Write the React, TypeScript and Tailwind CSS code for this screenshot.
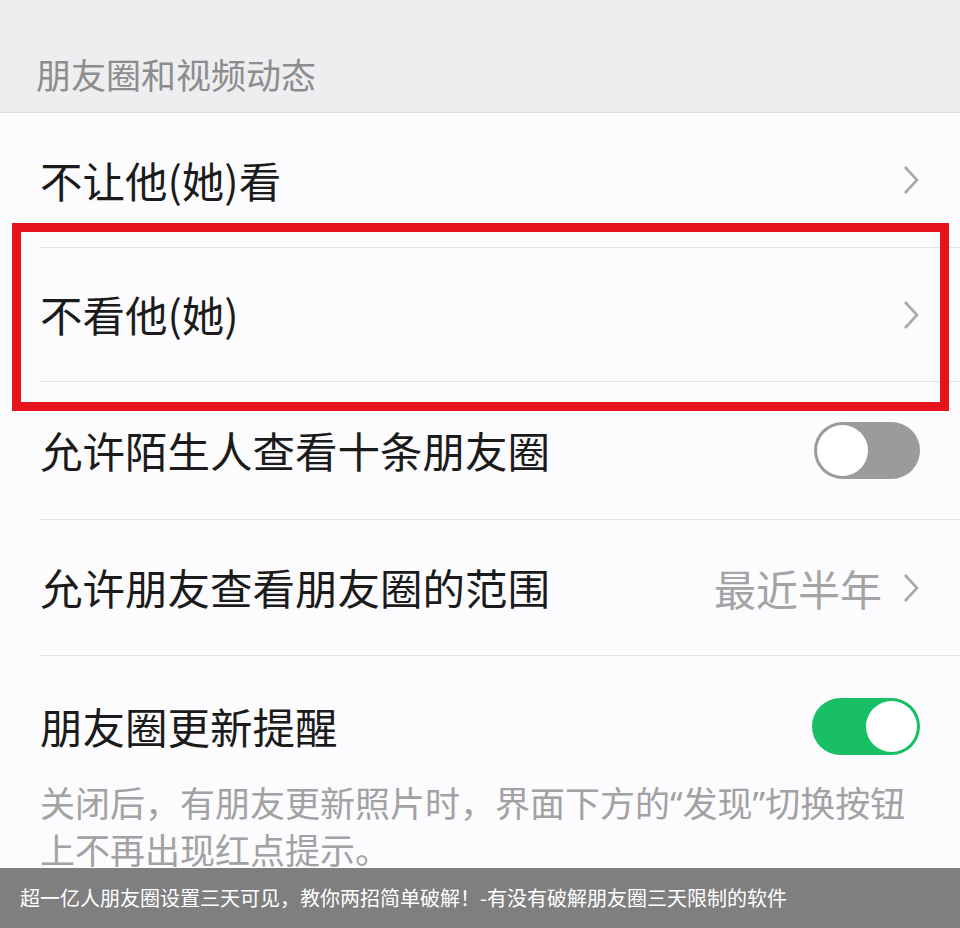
import React from 'react';

const font = { fontFamily: '"Noto Sans CJK SC", "Noto Sans", sans-serif' };

function Chevron() {
  return (
    <svg width="18" height="32" viewBox="0 0 18 32" className="shrink-0">
      <path d="M3 3 L15 16 L3 29" fill="none" stroke="#a9a9ab" strokeWidth="2.6" strokeLinejoin="miter" />
    </svg>
  );
}

function Toggle({ on }: { on: boolean }) {
  if (on) {
    return (
      <div className="flex h-[57px] w-[108px] items-center justify-end rounded-full bg-[#19bf64] pr-[3px]">
        <div className="h-[51px] w-[51px] rounded-full bg-white" />
      </div>
    );
  }
  return (
    <div className="flex h-[57px] w-[106px] items-center rounded-full bg-[#9b9a9c] pl-[3px]">
      <div className="h-[51px] w-[51px] rounded-full bg-white" />
    </div>
  );
}

function Row({ label, h, right }: { label: string; h: string; right?: React.ReactNode }) {
  return (
    <div className={`flex items-center border-b border-[#e3e2e4] pr-[40px] ${h}`}>
      <span className="flex-1 text-[42.5px] leading-none text-[#1b1b1b]">{label}</span>
      {right}
    </div>
  );
}

export default function App() {
  return (
    <div className="relative h-[928px] w-[960px] overflow-hidden bg-[#fcfbfd]" style={font}>
      <div className="flex h-[113px] items-center border-b border-[#dcdbdd] bg-[#eeedef] pl-[36px] pt-[52px] pb-[18px]">
        <span className="text-[35px] leading-none text-[#8d8c8e]">朋友圈和视频动态</span>
      </div>

      <div className="pl-[40px]">
        <Row label="不让他(她)看" h="h-[135px]" right={<Chevron />} />
        <Row label="不看他(她)" h="h-[134px]" right={<Chevron />} />
        <Row label="允许陌生人查看十条朋友圈" h="h-[138px]" right={<Toggle on={false} />} />
        <Row
          label="允许朋友查看朋友圈的范围"
          h="h-[136px]"
          right={
            <div className="flex items-center gap-[20px]">
              <span className="text-[42px] leading-none text-[#a4a3a5]">最近半年</span>
              <Chevron />
            </div>
          }
        />
        <div className="flex h-[140px] items-center pr-[40px]">
          <span className="flex-1 text-[42.5px] leading-none text-[#1b1b1b]">朋友圈更新提醒</span>
          <Toggle on={true} />
        </div>
        <p
          className="-mt-[16px] pr-[20px] text-[35px] leading-[47px] text-[#a2a1a3]"
          style={{ fontFamily: '"Noto Sans", "Noto Sans CJK SC", sans-serif' }}
        >
          关闭后，有朋友更新照片时，界面下方的“发现”切换按钮上不再出现红点提示。
        </p>
      </div>

      <div className="pointer-events-none absolute left-[12px] top-[223px] h-[188px] w-[937px] border-[9px] border-[#e5141c]" />

      <div className="absolute bottom-0 left-0 flex h-[60px] w-full items-center bg-[#7f7f7f] pl-[20px]">
        <span className="text-[20px] leading-none text-white">
          超一亿人朋友圈设置三天可见，教你两招简单破解！-有没有破解朋友圈三天限制的软件
        </span>
      </div>
    </div>
  );
}
